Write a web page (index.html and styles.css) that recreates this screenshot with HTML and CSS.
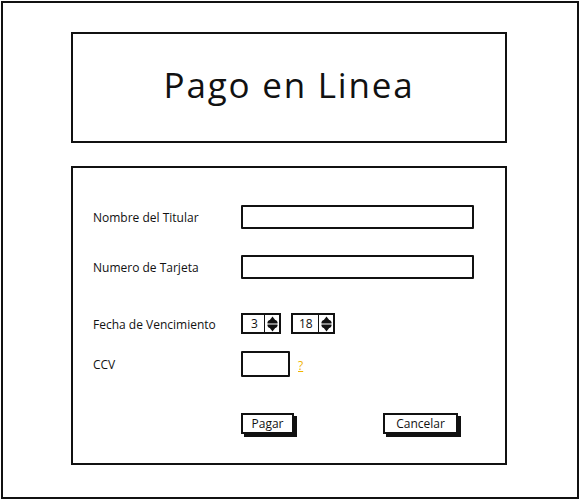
FILE: index.html
```html
<!DOCTYPE html>
<html lang="es">
<head>
<meta charset="utf-8">
<title>Pago en Linea</title>
<link rel="stylesheet" href="styles.css">
</head>
<body>
<div class="frame">
  <div class="title-box">
    <h1 class="title">Pago en Linea</h1>
  </div>
  <div class="form-box">
    <div class="row row-name">
      <span class="label">Nombre del Titular</span>
      <div class="input wide"></div>
    </div>
    <div class="row row-card">
      <span class="label">Numero de Tarjeta</span>
      <div class="input wide"></div>
    </div>
    <div class="row row-date">
      <span class="label">Fecha de Vencimiento</span>
      <div class="spinner s-month">
        <span class="spin-val">3</span>
        <span class="spin-arrows"><svg width="11" height="16" viewBox="0 0 11 16"><path d="M5.5 0.5 L10.5 7 L0.5 7 Z" fill="#111"/><path d="M5.5 15.5 L10.5 9 L0.5 9 Z" fill="#111"/><rect x="0.5" y="4" width="10" height="8" rx="3" fill="#111"/><rect x="0" y="7.5" width="11" height="1" fill="#fff"/></svg></span>
      </div>
      <div class="spinner s-year">
        <span class="spin-val">18</span>
        <span class="spin-arrows"><svg width="11" height="16" viewBox="0 0 11 16"><path d="M5.5 0.5 L10.5 7 L0.5 7 Z" fill="#111"/><path d="M5.5 15.5 L10.5 9 L0.5 9 Z" fill="#111"/><rect x="0.5" y="4" width="10" height="8" rx="3" fill="#111"/><rect x="0" y="7.5" width="11" height="1" fill="#fff"/></svg></span>
      </div>
    </div>
    <div class="row row-ccv">
      <span class="label">CCV</span>
      <div class="input ccv"></div>
      <span class="help">?</span>
    </div>
    <div class="row row-buttons">
      <span class="label"></span>
      <div class="btn btn-pay">Pagar</div>
      <div class="btn btn-cancel">Cancelar</div>
    </div>
  </div>
</div>
</body>
</html>
```

FILE: styles.css
```css
* { box-sizing: border-box; }
html, body { margin: 0; padding: 0; background: #fff; }
body {
  font-family: "Open Sans", "Lato", sans-serif;
  color: #111;
}
.frame {
  margin: 1px;
  width: 578px;
  height: 498px;
  border: 2px solid #111;
  padding: 29px 0 0 68px;
}
.title-box {
  width: 436px;
  height: 111px;
  border: 2px solid #111;
  display: flex;
  align-items: center;
  justify-content: center;
}
.title {
  margin: 0;
  font-size: 35px;
  font-weight: 500;
  letter-spacing: 1.8px;
  padding-bottom: 6px;
}
.form-box {
  margin-top: 23px;
  width: 436px;
  height: 299px;
  border: 2px solid #111;
  padding: 37px 0 0 20px;
}
.row {
  display: flex;
  align-items: center;
}
.label {
  width: 148px;
  flex: none;
  font-size: 12px;
  padding-top: 1px;
}
.row-name { height: 24px; }
.row-card { height: 24px; margin-top: 26px; }
.row-date { height: 21px; margin-top: 34px; }
.row-ccv { height: 26px; margin-top: 17px; }
.row-buttons { height: 23px; margin-top: 36px; align-items: flex-start; }
.input {
  border: 2px solid #111;
  border-radius: 1px;
  height: 24px;
  background: #fff;
}
.wide { width: 233px; }
.ccv { width: 49px; height: 26px; }
.help {
  margin-left: 8px;
  margin-top: 2px;
  font-size: 12px;
  color: #f0b400;
  text-decoration: underline;
}
.spinner {
  display: flex;
  height: 21px;
  border: 2px solid #111;
  align-items: stretch;
}
.s-month { width: 40px; }
.s-year { width: 44px; margin-left: 10px; }
.spin-val {
  flex: 1;
  font-size: 12px;
  display: flex;
  align-items: center;
  padding-left: 8px;
  border-right: 1.5px solid #111;
}
.s-year .spin-val { padding-left: 6px; }
.spin-arrows {
  width: 14px;
  display: flex;
  align-items: center;
  justify-content: center;
}
.btn {
  height: 21px;
  border: 2px solid #111;
  box-shadow: 3px 3px 0 #111;
  font-size: 12px;
  display: flex;
  align-items: center;
  justify-content: center;
  background: #fff;
}
.btn-pay { width: 53px; }
.btn-cancel { width: 75px; margin-left: 89px; }
```
